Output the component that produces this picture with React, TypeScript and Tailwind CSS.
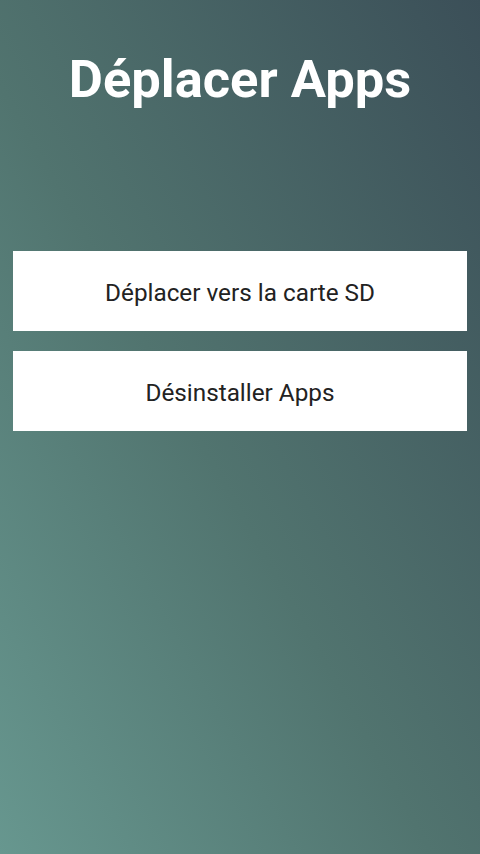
const App = () => {
  return (
    <div
      className="w-[480px] h-[854px] flex flex-col bg-[linear-gradient(to_top_right,#67978f_0%,#51746f_45%,#3b4f58_100%)]"
      style={{ fontFamily: "Roboto, 'Noto Sans', sans-serif" }}
    >
      <h1 className="mt-[51px] h-[56px] leading-[56px] text-center text-white font-bold text-[52.5px]">
        Déplacer Apps
      </h1>

      <div className="flex flex-col gap-[20px] px-[13px] mt-[144px]">
        <button className="h-[80px] w-full pt-[4px] bg-white text-[#222] text-[24.3px]">
          Déplacer vers la carte SD
        </button>
        <button className="h-[80px] w-full pt-[4px] bg-white text-[#222] text-[24.3px]">
          Désinstaller Apps
        </button>
      </div>
    </div>
  );
};

export default App;
